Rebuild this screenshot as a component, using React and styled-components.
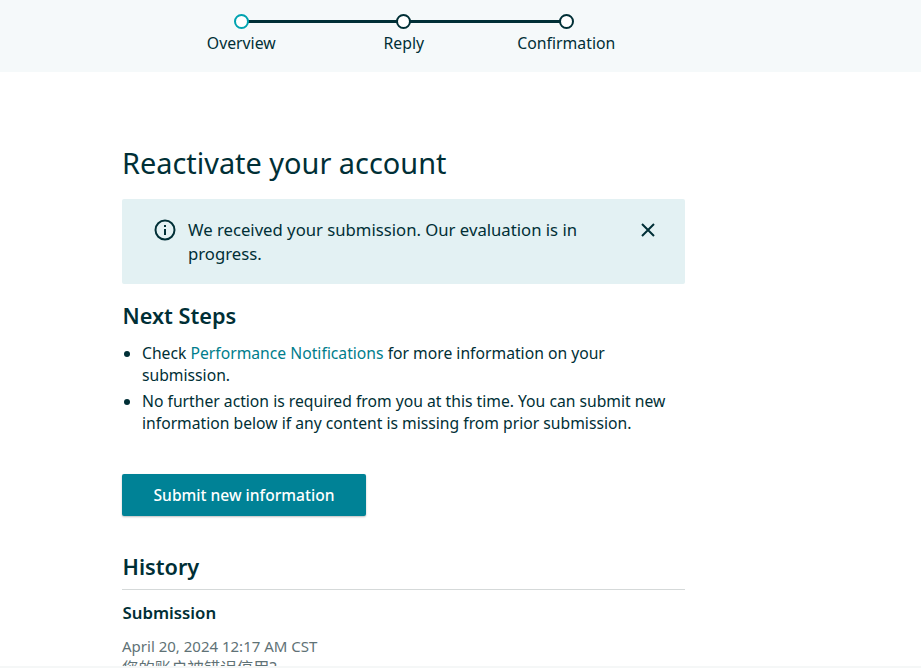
import React from "react";
import styled, { createGlobalStyle } from "styled-components";

const Global = createGlobalStyle`
  html, body { margin: 0; padding: 0; height: 100%; overflow: hidden; background: #fff; }
  body { font-family: "Noto Sans", "Noto Sans CJK SC", Arial, sans-serif; color: #002f36; }
  #root { height: 668px; overflow: hidden; }
`;
const Page = styled.div`height: 668px; overflow: hidden; position: relative;`;
const Header = styled.header`
  height: 72px; background: #f5f9fa; padding-left: 160px; box-sizing: border-box; display: flex;
`;
const Step = styled.div`
  width: 162.5px; display: flex; flex-direction: column; align-items: center; padding-top: 14px; position: relative;
`;
const Line = styled.span`
  position: absolute; top: 20px; left: 50%; width: 162.5px; height: 3px; background: #002f36;
`;
const Dot = styled.span`
  width: 15px; height: 15px; box-sizing: border-box; border-radius: 50%; background: #fff; position: relative; z-index: 1;
  border: 2px solid ${p => (p.$active ? "#00a3b0" : "#002f36")};
`;
const StepLabel = styled.span`font-size: 15.8px; line-height: 20px; margin-top: 4px; white-space: nowrap;`;
const Main = styled.main`width: 563px; margin-left: 122px; padding-top: 71px;`;
const Title = styled.h1`font-size: 28.9px; font-weight: 400; line-height: 40px; margin: 0 0 17px;`;
const Alert = styled.div`
  height: 85px; box-sizing: border-box; background: #e3f1f3; border-radius: 2px; display: flex; align-items: flex-start;
  padding: 19px 29px 0 32px; font-size: 16.7px; line-height: 23.5px; margin-top: -1px;
`;
const AlertIcon = styled.svg`width: 22px; height: 22px; flex: none; margin-right: 12px; margin-top: 1px;`;
const AlertText = styled.div`flex: 1;`;
const CloseIcon = styled.svg`width: 16px; height: 16px; flex: none; margin: 4px 0 0 40px;`;
const H2 = styled.h2`font-size: 21.7px; font-weight: 600; line-height: 28px; margin: ${p => p.$m}; padding-left: 0.5px;`;
const List = styled.ul`margin: 12px 0 0; padding: 0 0 0 20px; font-size: 15.7px; line-height: 22px;`;
const Item = styled.li`margin-bottom: 4px;`;
const Link = styled.a`color: #007d8c; text-decoration: none;`;
const Button = styled.button`
  display: block; width: 244px; height: 42px; margin-top: 40px; background: #008296; color: #fff; border: 0; border-radius: 2px;
  font: 500 15.6px "Noto Sans", sans-serif; box-shadow: 0 1px 2px rgba(0,0,0,.25);
`;
const HistoryHead = styled.div`margin-top: 37px; border-bottom: 1px solid #d5d9d9; padding-bottom: 8px;`;
const Sub = styled.h3`font-size: 16.8px; font-weight: 600; line-height: 24px; margin: 11px 0 0; padding-left: 0.5px;`;
const Muted = styled.div`font-size: ${p => p.$size || 15}px; line-height: 22px; color: #5f7276; margin-top: ${p => p.$mt || 0}px; white-space: nowrap;`;
const Strip = styled.div`position: absolute; left: 0; right: 0; bottom: 0; height: 2px; background: #f5f7f7;`;

export default function App() {
  return (
    <Page>
      <Global />
      <Header>
        <Step><Line /><Dot $active /><StepLabel>Overview</StepLabel></Step>
        <Step><Line /><Dot /><StepLabel>Reply</StepLabel></Step>
        <Step><Dot /><StepLabel>Confirmation</StepLabel></Step>
      </Header>
      <Main>
        <Title>Reactivate your account</Title>
        <Alert>
          <AlertIcon viewBox="0 0 22 22" fill="none" stroke="#002f36" strokeWidth="2">
            <circle cx="11" cy="11" r="9.5" />
            <path d="M11 10v6" />
            <path d="M11 6v2" />
          </AlertIcon>
          <AlertText>We received your submission. Our evaluation is in progress.</AlertText>
          <CloseIcon viewBox="0 0 16 16" fill="none" stroke="#002f36" strokeWidth="2">
            <path d="M2 2l12 12M14 2L2 14" />
          </CloseIcon>
        </Alert>
        <H2 $m="18px 0 0">Next Steps</H2>
        <List>
          <Item>Check <Link>Performance Notifications</Link> for more information on your submission.</Item>
          <Item>No further action is required from you at this time. You can submit new information below if any content is missing from prior submission.</Item>
        </List>
        <Button>Submit new information</Button>
        <HistoryHead><H2 $m="0">History</H2></HistoryHead>
        <Sub>Submission</Sub>
        <Muted $mt={10}>April 20, 2024 12:17 AM CST</Muted>
        <Muted $size={16.4}>您的账户被错误停用?</Muted>
      </Main>
      <Strip />
    </Page>
  );
}
